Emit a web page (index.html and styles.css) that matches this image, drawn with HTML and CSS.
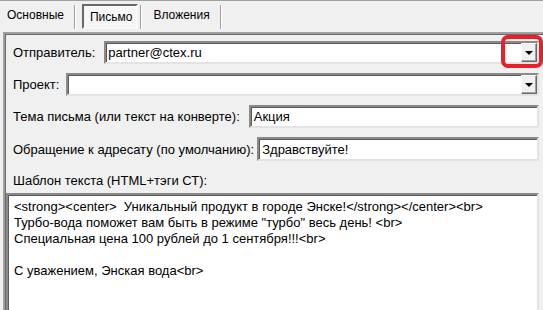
FILE: index.html
```html
<!DOCTYPE html>
<html lang="ru">
<head>
    <meta charset="UTF-8">
    <title>Письмо</title>
    <link rel="stylesheet" href="styles.css">
</head>
<body>
    <!-- Tabs -->
    <div class="tabs">
        <div class="tab">Основные</div>
        <div class="tab-sep"></div>
        <div class="tab tab-active">Письмо</div>
        <div class="tab-sep"></div>
        <div class="tab">Вложения</div>
        <div class="tab-sep"></div>
    </div>

    <!-- Letter panel -->
    <div class="panel">
        <div class="row row-sender">
            <label class="lbl">Отправитель:</label>
            <div class="combo">
                <span class="combo-value">partner@ctex.ru</span>
                <span class="combo-btn"><span class="arrow"></span></span>
                <span class="highlight"></span>
            </div>
        </div>

        <div class="row row-project">
            <label class="lbl">Проект:</label>
            <div class="combo">
                <span class="combo-value"></span>
                <span class="combo-btn"><span class="arrow"></span></span>
            </div>
        </div>

        <div class="row row-subject">
            <label class="lbl">Тема письма (или текст на конверте):</label>
            <div class="field">Акция</div>
        </div>

        <div class="row row-greeting">
            <label class="lbl">Обращение к адресату (по умолчанию):</label>
            <div class="field">Здравствуйте!</div>
        </div>

        <div class="row row-template">
            <label class="lbl">Шаблон текста (HTML+тэги СТ):</label>
        </div>

        <div class="memo">&lt;strong&gt;&lt;center&gt;  Уникальный продукт в городе Энске!&lt;/strong&gt;&lt;/center&gt;&lt;br&gt;
Турбо-вода поможет вам быть в режиме "турбо" весь день! &lt;br&gt;
Специальная цена 100 рублей до 1 сентября!!!&lt;br&gt;

С уважением, Энская вода&lt;br&gt;</div>
    </div>
</body>
</html>
```

FILE: styles.css
```css
* {
    box-sizing: border-box;
    margin: 0;
    padding: 0;
}

body {
    background: #f0f0f0;
    font-family: "Liberation Sans", Arial, sans-serif;
    font-size: 13px;
    color: #000;
    width: 543px;
    height: 310px;
    overflow: hidden;
}

/* Tabs */
.tabs {
    display: flex;
    align-items: center;
    height: 32px;
    border-top: 1px solid #a0a0a0;
    padding-left: 7px;
    font-size: 12px;
}

.tab {
    line-height: 23px;
    height: 25px;
}

.tab-active {
    border: 2px solid;
    border-color: #696969 #f8f8f8 #f8f8f8 #696969;
    background: #f7f7f7;
    padding: 0 4px 0 6px;
    line-height: 23px;
}

.tab-sep {
    width: 2px;
    height: 24px;
    border-left: 1px solid #a0a0a0;
    border-right: 1px solid #fff;
    margin: 0 11px 0 10px;
}

.tab-sep + .tab-active {
    margin-left: -5px;
}

.tab-active + .tab-sep {
    margin-left: 2px;
}

/* Panel */
.panel {
    border-top: 2px solid #a0a0a0;
    border-left: 2px solid #a0a0a0;
    margin-left: 3px;
    padding: 7px 0 0 0;
    height: 278px;
    display: flex;
    flex-direction: column;
    box-shadow: inset 1px 1px 0 #696969;
}

.row {
    display: flex;
    align-items: center;
    padding-left: 8px;
}

.lbl {
    white-space: nowrap;
    margin-right: 9px;
}

.row-sender { height: 23px; }
.row-project { height: 23px; margin-top: 9px; }
.row-subject { height: 23px; margin-top: 9px; }
.row-greeting { height: 24px; margin-top: 9px; }
.row-template { height: 16px; margin-top: 11px; }

.row-project .lbl { margin-right: 7px; }
.row-subject .lbl { margin-right: 9px; }
.row-greeting .lbl { margin-right: 3px; }

/* Combo box */
.combo,
.field {
    position: relative;
    flex: 1;
    height: 100%;
    background: #fff;
    border: 2px solid;
    border-color: #8a8a8a #e3e3e3 #e3e3e3 #8a8a8a;
    box-shadow: inset 1px 1px 0 #5a5a5a;
    margin-right: 4px;
    display: flex;
    align-items: center;
}

.combo-value {
    flex: 1;
    padding-left: 2px;
}

.field {
    padding-left: 3px;
}

.combo-btn {
    width: 16px;
    height: 19px;
    background: #f0f0f0;
    border: 1px solid;
    border-color: #fff #696969 #696969 #fff;
    box-shadow: inset -1px -1px 0 #a0a0a0;
    display: flex;
    align-items: center;
    justify-content: center;
}

.arrow {
    width: 0;
    height: 0;
    border-left: 4px solid transparent;
    border-right: 4px solid transparent;
    border-top: 4px solid #000;
    margin-top: 1px;
}

/* Red marker around the dropdown button */
.highlight {
    position: absolute;
    right: -6px;
    top: -8px;
    width: 42px;
    height: 33px;
    border: 4px solid #e8202a;
    border-radius: 7px;
}

/* Template text */
.memo {
    flex: 1;
    margin: 5px 4px 0 1px;
    background: #fff;
    border-top: 2px solid #8a8a8a;
    border-left: 2px solid #8a8a8a;
    border-right: 2px solid #e3e3e3;
    box-shadow: inset 1px 1px 0 #5a5a5a;
    padding: 4px 0 0 6px;
    white-space: pre;
    line-height: 16px;
    overflow: hidden;
}
```
